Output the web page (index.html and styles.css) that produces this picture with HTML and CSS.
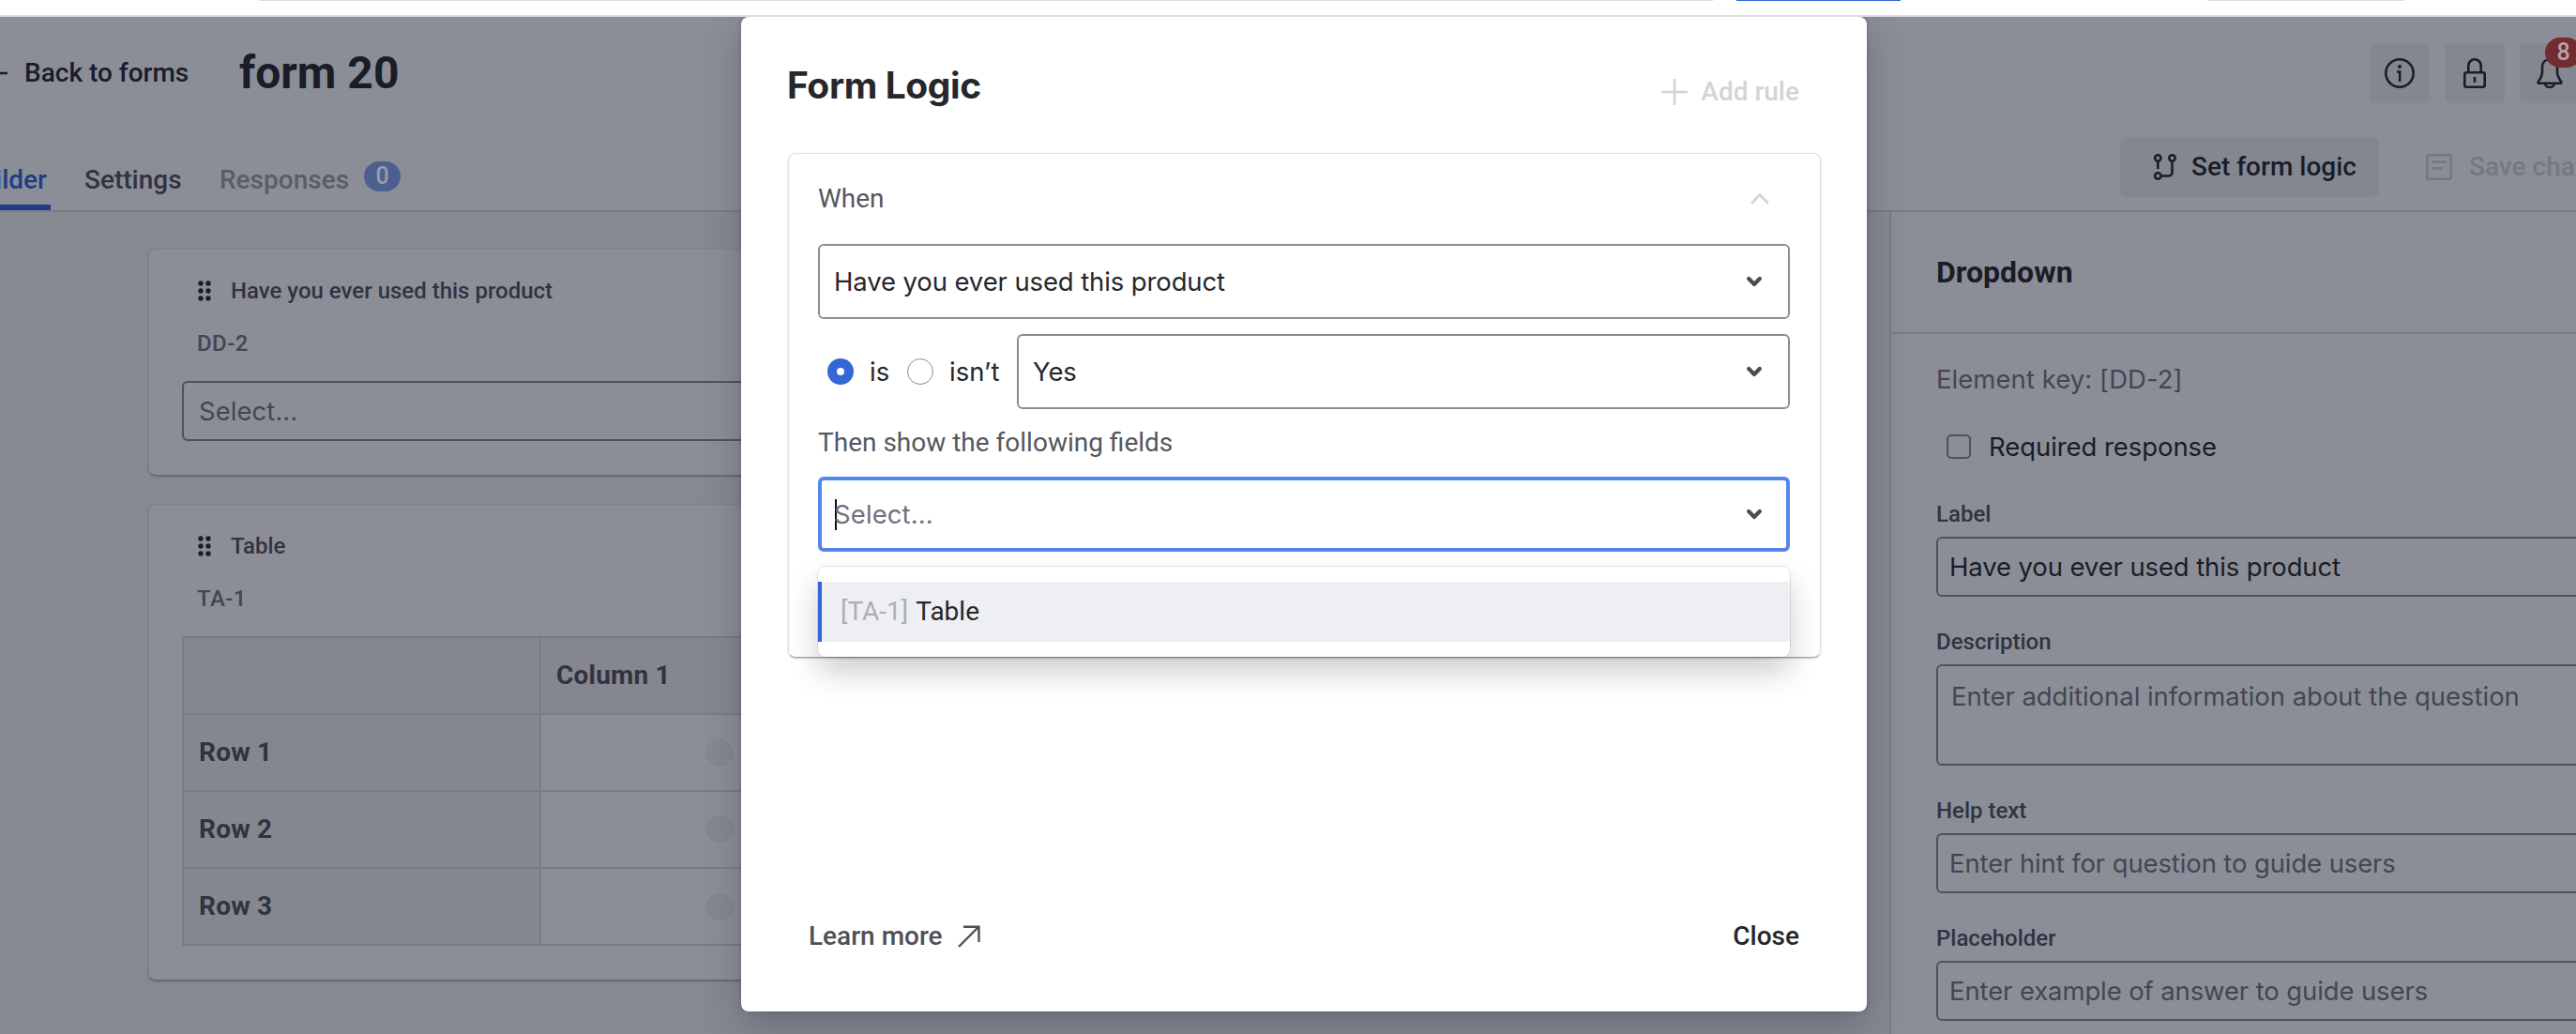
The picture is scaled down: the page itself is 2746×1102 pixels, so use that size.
FILE: index.html
```html
<!DOCTYPE html>
<html lang="en">
<head>
<meta charset="utf-8">
<title>form 20</title>
<link rel="stylesheet" href="styles.css">
</head>
<body>
<div class="banner"><span class="edge edge-field"></span><span class="edge edge-primary"></span><span class="edge edge-plain"></span></div>
<div class="app">
  <header class="header">
    <div class="header-row">
      <a class="back"><svg width="28" height="28" viewBox="0 0 28 28"><path d="M28 14H3M12 4L2 14l10 10"/></svg>Back to forms</a>
      <h1 class="form-title">form 20</h1>
      <div class="icon-buttons">
        <button class="icon-button"><svg width="32" height="32" viewBox="0 0 32 32"><circle cx="16" cy="16" r="14.700"/><path d="M13 14.500h3.200V25"/><circle class="solid" cx="16" cy="9" r="2"/></svg></button>
        <button class="icon-button"><svg width="32" height="32" viewBox="0 0 32 32"><rect x="5.300" y="15.300" width="21.400" height="15.400" rx="2"/><path d="M9.300 15V8a6.700 6.700 0 0 1 13.400 0v7M16 20v6"/></svg></button>
        <button class="icon-button"><svg width="32" height="32" viewBox="0 0 32 32"><path d="M16 1.300c-5 0-8 3.600-8 8.500v5c0 4-1.500 6.500-4.300 10.500c-.4.800 0 1.400.8 1.400h23c.8 0 1.200-.6.8-1.400C25.500 21.300 24 18.800 24 14.800v-5c0-4.900-3-8.500-8-8.500zM11 27a5 4 0 0 0 10 0"/></svg><span class="alert-count">8</span></button>
      </div>
    </div>
    <div class="header-row header-row-tabs">
      <nav class="tabs">
        <a class="tab tab-active">Builder</a>
        <a class="tab tab-settings">Settings</a>
        <a class="tab tab-muted">Responses</a>
        <span class="tab-count">0</span>
      </nav>
      <div class="actions">
        <button class="action"><svg width="28" height="28" viewBox="0 0 28 28"><circle cx="6.300" cy="4.500" r="3.200"/><circle cx="21.500" cy="4.500" r="3.200"/><circle cx="6.300" cy="23.500" r="3.200"/><path d="M6.300 7.700V16M21.500 7.700V19.500a4 4 0 0 1-4 4H9.500"/></svg>Set form logic</button>
        <button class="action action-disabled"><svg width="28" height="28" viewBox="0 0 28 28"><rect x="1.300" y="1.300" width="25.400" height="25.400" rx="2"/><path d="M6 8.500h16M6 15.500h12"/></svg>Save changes</button>
      </div>
    </div>
  </header>
  <div class="workspace">
    <main class="canvas">
      <section class="card">
        <div class="card-title"><svg class="grip" width="14" height="24" viewBox="0 0 14 24"><circle cx="3" cy="4" r="2.700"/><circle cx="11" cy="4" r="2.700"/><circle cx="3" cy="12" r="2.700"/><circle cx="11" cy="12" r="2.700"/><circle cx="3" cy="20" r="2.700"/><circle cx="11" cy="20" r="2.700"/></svg>Have you ever used this product</div>
        <div class="card-key">DD-2</div>
        <div class="input placeholder card-input">Select...</div>
      </section>
      <section class="card">
        <div class="card-title"><svg class="grip" width="14" height="24" viewBox="0 0 14 24"><circle cx="3" cy="4" r="2.700"/><circle cx="11" cy="4" r="2.700"/><circle cx="3" cy="12" r="2.700"/><circle cx="11" cy="12" r="2.700"/><circle cx="3" cy="20" r="2.700"/><circle cx="11" cy="20" r="2.700"/></svg>Table</div>
        <div class="card-key">TA-1</div>
        <div class="grid">
          <div class="cell head"></div><div class="cell head column">Column 1</div>
          <div class="cell head">Row 1</div><div class="cell answer"><span class="dim-radio"></span></div>
          <div class="cell head">Row 2</div><div class="cell answer"><span class="dim-radio"></span></div>
          <div class="cell head">Row 3</div><div class="cell answer"><span class="dim-radio"></span></div>
        </div>
      </section>
    </main>
    <aside class="panel">
      <h2 class="panel-title">Dropdown</h2>
      <div class="panel-body">
        <div class="element-key">Element key: [DD-2]</div>
        <label class="check-row"><span class="checkbox"></span>Required response</label>
        <div class="field-label">Label</div>
        <div class="input">Have you ever used this product</div>
        <div class="field-label">Description</div>
        <div class="input placeholder textarea">Enter additional information about the question</div>
        <div class="field-label">Help text</div>
        <div class="input placeholder">Enter hint for question to guide users</div>
        <div class="field-label">Placeholder</div>
        <div class="input placeholder">Enter example of answer to guide users</div>
      </div>
    </aside>
  </div>
  <div class="modal" role="dialog">
    <div class="modal-head">
      <h2 class="modal-title">Form Logic</h2>
      <button class="add-rule"><svg width="28" height="28" viewBox="0 0 28 28"><path d="M14 0v28M0 14h28"/></svg>Add rule</button>
    </div>
    <div class="rule">
      <div class="rule-head">When<svg width="20" height="12" viewBox="0 0 20 12"><path d="M1 11L10 1.500 19 11"/></svg></div>
      <div class="select">Have you ever used this product<svg class="chevron" width="16" height="12" viewBox="0 0 16 12"><path d="M2.200 3L8 9l5.800-6"/></svg></div>
      <div class="condition">
        <span class="radio radio-on"></span><span class="radio-label is">is</span>
        <span class="radio"></span><span class="radio-label isnt">isn’t</span>
        <div class="select">Yes<svg class="chevron" width="16" height="12" viewBox="0 0 16 12"><path d="M2.200 3L8 9l5.800-6"/></svg></div>
      </div>
      <div class="then">Then show the following fields</div>
      <div class="combo">
        <div class="select select-focus"><span class="caret"></span>Select...<svg class="chevron" width="16" height="12" viewBox="0 0 16 12"><path d="M2.200 3L8 9l5.800-6"/></svg></div>
        <div class="menu"><div class="option"><span class="option-key">[TA-1]</span>Table</div></div>
      </div>
    </div>
    <div class="modal-foot">
      <a class="learn">Learn more<svg width="24" height="24" viewBox="0 0 24 24"><path d="M1 23L22 2M6 1.700h16.500V18"/></svg></a>
      <button class="close">Close</button>
    </div>
  </div>
</div>
</body>
</html>
```
FILE: styles.css
```css
:root {
  --surface: #8b8e97;
  --ground: #868992;
  --shade: #848790;
  --line: #797c85;
  --ink: #1a1c27;
  --ink-2: #31333f;
  --ink-3: #434652;
  --field-line: #4e5161;
  --blue: #3366d6;
}
* { box-sizing: border-box; }
body {
  margin: 0;
  width: 2746px;
  height: 1102px;
  overflow: hidden;
  background: #fff;
  font: 500 28px/32px Roboto, sans-serif;
  color: var(--ink);
}
h1, h2 { margin: 0; }
button { border: 0; padding: 0; background: none; font: inherit; color: inherit; }
svg { display: block; flex: none; fill: none; stroke: currentColor; stroke-width: 2.600; }

.banner { display: flex; height: 18px; border-bottom: 2px solid #dcdcdd; }
.edge { height: 1px; background: #dcdcdd; }
.edge-field { width: 1550px; margin-left: 276px; }
.edge-primary { width: 175px; margin-left: 25px; background: var(--blue); }
.edge-plain { width: 210px; margin-left: 327px; }

.app { position: relative; display: flex; flex-direction: column; height: 1084px; overflow: hidden; }
.header { height: 208px; background: var(--surface); border-bottom: 2px solid var(--line); }
.header-row { display: flex; align-items: center; height: 120px; white-space: nowrap; }
.back { display: flex; align-items: center; gap: 18px; width: 275px; margin-left: -20px; }
.form-title { font-size: 48px; line-height: 56px; font-weight: 700; }
.icon-buttons { display: flex; gap: 16px; margin: 0 -4px 0 auto; }
.icon-button { position: relative; display: flex; align-items: center; justify-content: center; width: 64px; height: 64px; border-radius: 6px; background: var(--shade); }
.solid { fill: currentColor; stroke: none; }
.alert-count { position: absolute; left: 27px; top: -6px; width: 39px; height: 32px; border-radius: 16px; background: #722b2f; color: #b9a3a8; font-size: 25px; text-align: center; }

.header-row-tabs { height: 86px; }
.tabs { display: flex; align-items: flex-end; align-self: flex-end; }
.tab { height: 48px; color: var(--ink-2); }
.tab-active { width: 104px; margin-left: -50px; padding-right: 4px; text-align: right; color: #1d3e83; border-bottom: 6px solid #1d3e83; border-radius: 0 2px 0 0; }
.tab-settings { width: 144px; margin-left: 36px; }
.tab-muted { width: 154px; color: #5a5d68; }
.tab-count { width: 39px; height: 32px; margin-bottom: 20px; border-radius: 16px; background: #4c5f8e; color: #979dad; font-size: 25px; text-align: center; }
.actions { display: flex; gap: 16px; width: 486px; height: 64px; margin: 0 0 6px auto; }
.action { display: flex; flex: none; align-items: center; gap: 14px; width: 276px; height: 64px; padding-left: 34px; border-radius: 6px; background: var(--shade); }
.action-disabled { gap: 18px; background: none; color: #757883; }

.workspace { display: flex; flex: 1; background: var(--ground); }
.canvas { display: flex; flex-direction: column; gap: 30px; width: 2014px; padding: 39px 157px 0 158px; }
.card { padding: 28px 35px 36px; background: var(--surface); border: 1px solid #7f828b; border-bottom-color: #666973; border-radius: 8px; box-shadow: 0 1px 2px rgba(50, 52, 65, .4); }
.card-title { display: flex; align-items: center; gap: 21px; padding-left: 17px; font-size: 24px; color: var(--ink-2); font-weight: 500; }
.grip { fill: var(--ink); stroke: none; }
.card-key { margin: 24px 0; padding-left: 16px; font-size: 24px; letter-spacing: .4px; color: var(--ink-3); }
.input { height: 64px; padding: 0 12px; border: 2px solid var(--field-line); border-radius: 6px; font: 400 27.500px/60px Inter, sans-serif; letter-spacing: -.12px; color: var(--ink); white-space: nowrap; }
.card-input { padding-left: 16px; letter-spacing: .05px; }
.placeholder { color: #434652; }
.grid { display: grid; grid-template-columns: 381px 382px; width: 765px; border: 2px solid var(--line); border-width: 2px 0 0 2px; font-weight: 700; letter-spacing: .2px; color: var(--ink-2); }
.cell { display: flex; align-items: center; height: 82px; padding-left: 16px; border-right: 2px solid var(--line); border-bottom: 2px solid var(--line); }
.head { background: var(--shade); }
.answer { justify-content: center; padding: 0; }
.dim-radio { width: 28px; height: 28px; border: 1px solid #7f828b; border-radius: 50%; background: var(--ground); }

.panel { width: 732px; background: var(--surface); border-left: 2px solid var(--line); }
.panel-title { height: 130px; padding-left: 48px; border-bottom: 2px solid var(--line); font: 700 32px/128px Roboto, sans-serif; }
.panel-body { width: 780px; padding: 32px 40px 0 48px; }
.element-key, .check-row { font: 400 27.500px/32px Inter, sans-serif; letter-spacing: -.07px; }
.element-key { color: var(--ink-3); letter-spacing: .05px; }
.check-row { display: flex; align-items: center; gap: 19px; margin-top: 40px; padding-left: 11px; }
.checkbox { width: 26px; height: 26px; border: 2px solid var(--field-line); border-radius: 5px; }
.field-label { margin: 32px 0 8px; font-size: 24px; font-weight: 500; color: var(--ink-2); }
.check-row + .field-label { margin-top: 40px; }
.textarea { height: 108px; padding: 12px 14px; line-height: 40px; letter-spacing: -.04px; }

.modal { position: absolute; left: 790px; top: 0; display: flex; flex-direction: column; width: 1200px; height: 1060px; padding: 49px 49px 65px 50px; border-radius: 8px; background: #fff; color: #26272b; box-shadow: 0 16px 40px rgba(40, 42, 52, .3), 0 0 4px rgba(40, 42, 52, .3); }
.modal-head { display: flex; align-items: flex-start; justify-content: space-between; height: 96px; padding-right: 23px; }
.modal-title { margin-left: -1px; font: 700 39px/48px Inter, sans-serif; letter-spacing: -.4px; }
.add-rule { display: flex; align-items: center; gap: 14px; margin-top: 15px; color: #d3d4d8; }
.rule { height: 538px; padding: 32px 32px 0 31px; border: 1px solid #dfdfe1; border-bottom-color: #a0a1a5; border-radius: 8px; box-shadow: 0 1px 2px rgba(0, 0, 0, .2); }
.rule-head { display: flex; align-items: center; justify-content: space-between; margin-bottom: 32px; padding-right: 22px; font-weight: 400; color: #55575d; }
.rule-head svg { color: #d3d4d8; }
.select { display: flex; align-items: center; flex: 1; height: 80px; padding: 0 28px 0 15px; border: 2px solid #8b8e96; border-radius: 6px; font: 400 27.500px/32px Inter, sans-serif; letter-spacing: -.12px; }
.chevron { margin-left: auto; color: #4b4c54; stroke-width: 4.200; stroke-linecap: round; stroke-linejoin: round; }
.condition { display: flex; align-items: center; margin-top: 16px; padding-left: 10px; }
.radio { width: 28px; height: 28px; border: 1.500px solid #8b8e96; border-radius: 50%; }
.radio-on { border: 10px solid var(--blue); }
.radio-label { font: 400 27.500px/32px Inter, sans-serif; letter-spacing: 0; }
.is { width: 57px; padding-left: 17px; }
.isnt { width: 89px; padding-left: 17px; }
.then { margin: 20px 0 20px; font-weight: 400; color: #55575d; }
.combo { position: relative; }
.select-focus { padding: 0 26px 0 12px; border: 4px solid #5686e6; color: #6f7179; letter-spacing: .1px; }
.caret { width: 2px; height: 33px; margin: 0 -3px 0 2px; background: #111; }
.menu { position: absolute; left: 0; right: 0; top: 96px; padding: 16px 0; border-radius: 8px; background: #fff; box-shadow: 0 0 0 1px rgba(0, 0, 0, .09), 0 16px 32px rgba(0, 0, 0, .2); }
.option { display: flex; gap: 8px; height: 64px; padding-left: 20px; border-left: 4px solid var(--blue); background: #eeeff2; font-weight: 400; line-height: 64px; }
.option-key { color: #adaeb3; }
.modal-foot { position: relative; display: flex; justify-content: space-between; margin: auto 0 -1px; padding: 0 23px 0 22px; }
.learn { display: flex; align-items: center; gap: 16px; color: #4f5057; }
.learn svg { stroke-width: 2.400; }
```
